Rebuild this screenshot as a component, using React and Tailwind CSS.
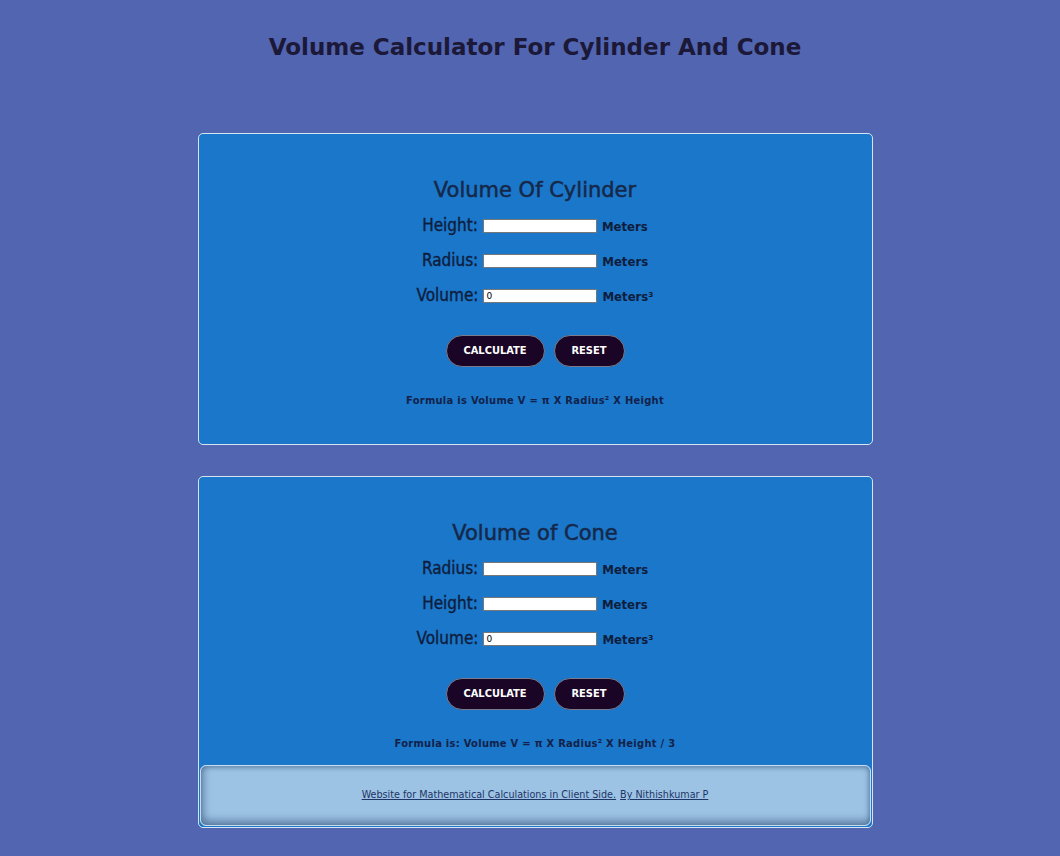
import { useState } from 'react';

const condFont = "font-['DejaVu_Sans_Condensed','DejaVu_Sans',sans-serif] font-stretch-condensed";

function Row({ label, value, setValue, unit, readOnly }) {
  return (
    <div className="flex items-end justify-center h-[35px]">
      <span className={`${condFont} text-[17px] text-[#0f1d3d] leading-none mr-[5px] [-webkit-text-stroke:0.35px_#0f1d3d]`}>
        {label}
      </span>
      <input
        type="text"
        value={value}
        readOnly={readOnly}
        onChange={(e) => setValue && setValue(e.target.value)}
        className="w-[114px] h-[14px] bg-white border border-[#777] text-[9px] px-[2px] leading-none text-black outline-none mb-[1px] font-['DejaVu_Sans',sans-serif]"
      />
      <span className={`${condFont} text-[13px] font-bold text-[#0f1d3d] leading-none ml-[5px] mb-[1px]`}>
        {unit}
      </span>
    </div>
  );
}

function Calc({ title, first, second, formula, cone }) {
  const [a, setA] = useState('');
  const [b, setB] = useState('');
  const [vol, setVol] = useState('0');

  const calculate = () => {
    const h = cone ? parseFloat(b) : parseFloat(a);
    const r = cone ? parseFloat(a) : parseFloat(b);
    let v = Math.PI * r * r * h;
    if (cone) v = v / 3;
    setVol(isNaN(v) ? '0' : v.toFixed(2));
  };

  const reset = () => {
    setA('');
    setB('');
    setVol('0');
  };

  return (
    <div className="flex flex-col items-center pt-[46px]">
      <h2 className="font-['DejaVu_Sans',sans-serif] text-[21px] text-[#16284a] leading-none mb-[-2px] [-webkit-text-stroke:0.5px_#16284a]">
        {title}
      </h2>
      <Row label={first} value={a} setValue={setA} unit="Meters" />
      <Row label={second} value={b} setValue={setB} unit="Meters" />
      <Row label="Volume:" value={vol} readOnly unit="Meters³" />
      <div className="flex gap-[9px] mt-[31px]">
        <button
          onClick={calculate}
          className={`${condFont} w-[99px] h-[32px] rounded-full bg-[#1a0526] border border-[#7a7a8a] text-white text-[11px] font-bold`}
        >
          CALCULATE
        </button>
        <button
          onClick={reset}
          className={`${condFont} w-[71px] h-[32px] rounded-full bg-[#1a0526] border border-[#7a7a8a] text-white text-[11px] font-bold`}
        >
          RESET
        </button>
      </div>
      <p className={`${condFont} mt-[26px] text-[11px] font-bold tracking-[0.3px] text-[#12224a]`}>
        {formula}
      </p>
    </div>
  );
}

export default function App() {
  return (
    <div className="min-h-[856px] bg-[#5165b0] flex flex-col items-center pl-[10px]">
      <h1 className="mt-[33px] font-['DejaVu_Sans',sans-serif] font-bold text-[23px] text-[#1c1838] leading-[28px]">
        Volume Calculator For Cylinder And Cone
      </h1>

      <div className="mt-[72px] w-[675px] h-[312px] bg-[#1a77c9] border border-[#d6e4f2] rounded-[5px]">
        <Calc
          title="Volume Of Cylinder"
          first="Height:"
          second="Radius:"
          formula="Formula is Volume V = π X Radius² X Height"
        />
      </div>

      <div className="mt-[31px] w-[675px] h-[352px] bg-[#1a77c9] border border-[#d6e4f2] rounded-[5px] flex flex-col">
        <div className="flex-1">
          <Calc
            title="Volume of Cone"
            first="Radius:"
            second="Height:"
            formula="Formula is: Volume V = π X Radius² X Height / 3"
            cone
          />
        </div>
        <div className="mx-[1px] mb-[1px] h-[61px] rounded-[6px] bg-[#9dc3e4] border border-[#c8dcf0] flex items-center justify-center gap-[4px] shadow-[inset_2px_-4px_8px_rgba(30,60,100,0.55),inset_-1px_2px_4px_rgba(30,60,100,0.35)]">
          <a href="#" className={`${condFont} text-[10.7px] text-[#1e3566] underline`}>
            Website for Mathematical Calculations in Client Side.
          </a>
          <a href="#" className={`${condFont} text-[10.7px] text-[#1e3566] underline`}>
            By Nithishkumar P
          </a>
        </div>
      </div>
    </div>
  );
}
